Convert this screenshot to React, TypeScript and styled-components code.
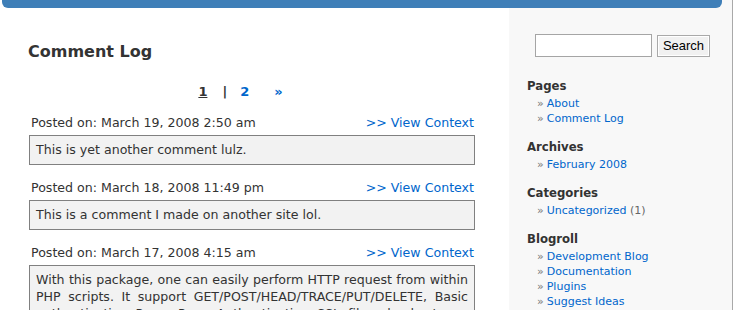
import React from "react";
import styled, { createGlobalStyle } from "styled-components";

const GlobalStyle = createGlobalStyle`
  html, body { margin: 0; padding: 0; background: #ffffff; }
  body { font-family: "DejaVu Sans", Verdana, sans-serif; color: #333333; overflow: hidden; }
  * { box-sizing: border-box; }
`;

const Wrapper = styled.div`
  width: 733px;
  min-height: 310px;
  border-right: 1px solid #a9a9a9;
  background: linear-gradient(to right, #ffffff 0, #ffffff 509px, #f8f8f8 509px, #f8f8f8 100%);
`;

const TopBar = styled.div`
  height: 8px;
  margin: 0 10px 0 2px;
  background: #3f7fb8;
  border-radius: 0 0 6px 6px;
`;

const Columns = styled.div`
  display: flex;
  align-items: flex-start;
`;

const Main = styled.main`
  width: 509px;
  padding: 0 34px 0 28px;
`;

const Title = styled.h1`
  margin: 33px 0 0;
  font-size: 16px;
  line-height: 22px;
  font-weight: bold;
  color: #333333;
`;

const Pager = styled.div`
  display: flex;
  justify-content: center;
  align-items: baseline;
  margin: 21px 0 0;
  padding-right: 22px;
  font-size: 13px;
  line-height: 16px;
  font-weight: bold;
`;

const PageNum = styled.a<{ $current?: boolean }>`
  color: ${(p) => (p.$current ? "#333333" : "#0066cc")};
  text-decoration: ${(p) => (p.$current ? "underline" : "none")};
  margin: 0 ${(p) => (p.$current ? "7px" : "0")} 0 0;
`;

const Sep = styled.span`
  color: #333333;
  margin: 0 13px 0 8px;
`;

const Next = styled.a`
  color: #0066cc;
  text-decoration: none;
  margin-left: 25px;
`;

const PostList = styled.div`
  margin: 14px 0 0 1px;
  width: 446px;
`;

const Post = styled.div`
  margin-bottom: 14px;
`;

const PostHead = styled.div`
  display: flex;
  justify-content: space-between;
  padding: 0 1px 0 2px;
  font-size: 12.6px;
  line-height: 17px;
  margin-bottom: 4px;
`;

const ContextLink = styled.a`
  color: #0066cc;
  text-decoration: none;
`;

const CommentBox = styled.div`
  border: 1px solid #808080;
  background: #f2f2f2;
  padding: 5px 6px 6px 6px;
  font-size: 12.6px;
  line-height: 17px;
  text-align: justify;
  color: #333333;
`;

const Sidebar = styled.aside`
  width: 223px;
  padding: 26px 0 0 18px;
`;

const SearchForm = styled.form`
  display: flex;
  align-items: center;
  gap: 5px;
  margin-left: 8px;
`;

const SearchInput = styled.input`
  width: 117px;
  height: 23px;
  border: 1px solid #a5a5a5;
  background: #ffffff;
  padding: 2px;
`;

const SearchButton = styled.button`
  height: 22px;
  width: 53px;
  padding: 0;
  border: 1px solid #a9a9a9;
  background: #f1f1f1;
  font-family: "Liberation Sans", Arial, sans-serif;
  font-size: 13px;
  color: #000000;
  box-shadow: inset 0 0 0 1px #ffffff;
`;

const Section = styled.section`
  margin-top: 21px;
  & + & { margin-top: 13px; }
`;

const SectionTitle = styled.h2`
  margin: 0 0 2px;
  font-size: 11.7px;
  line-height: 16px;
  font-weight: bold;
  color: #333333;
`;

const LinkList = styled.ul`
  list-style: none;
  margin: 0;
  padding: 0 0 0 10px;
`;

const LinkItem = styled.li`
  font-size: 11px;
  line-height: 15px;
  color: #666666;
  &::before {
    content: "»";
    color: #777777;
    margin-right: 3px;
  }
`;

const SideLink = styled.a`
  color: #0066cc;
  text-decoration: none;
`;

const Count = styled.span`
  color: #666666;
`;

const posts = [
  { date: "March 19, 2008 2:50 am", text: "This is yet another comment lulz." },
  { date: "March 18, 2008 11:49 pm", text: "This is a comment I made on another site lol." },
  {
    date: "March 17, 2008 4:15 am",
    text:
      "With this package, one can easily perform HTTP request from within PHP scripts. It support GET/POST/HEAD/TRACE/PUT/DELETE, Basic authentication, Proxy, Proxy Authentication, SSL, file uploads etc.",
  },
];

const sections: { title: string; links: { label: string; count?: string }[] }[] = [
  { title: "Pages", links: [{ label: "About" }, { label: "Comment Log" }] },
  { title: "Archives", links: [{ label: "February 2008" }] },
  { title: "Categories", links: [{ label: "Uncategorized", count: "(1)" }] },
  {
    title: "Blogroll",
    links: [
      { label: "Development Blog" },
      { label: "Documentation" },
      { label: "Plugins" },
      { label: "Suggest Ideas" },
    ],
  },
];

export default function App() {
  return (
    <>
      <GlobalStyle />
      <Wrapper>
        <TopBar />
        <Columns>
          <Main>
            <Title>Comment Log</Title>
            <Pager>
              <PageNum $current>1</PageNum>
              <Sep>|</Sep>
              <PageNum href="#">2</PageNum>
              <Next href="#">»</Next>
            </Pager>
            <PostList>
              {posts.map((p) => (
                <Post key={p.date}>
                  <PostHead>
                    <span>Posted on: {p.date}</span>
                    <ContextLink href="#">&gt;&gt; View Context</ContextLink>
                  </PostHead>
                  <CommentBox>{p.text}</CommentBox>
                </Post>
              ))}
            </PostList>
          </Main>
          <Sidebar>
            <SearchForm onSubmit={(e) => e.preventDefault()}>
              <SearchInput type="text" />
              <SearchButton type="submit">Search</SearchButton>
            </SearchForm>
            {sections.map((s) => (
              <Section key={s.title}>
                <SectionTitle>{s.title}</SectionTitle>
                <LinkList>
                  {s.links.map((l) => (
                    <LinkItem key={l.label}>
                      <SideLink href="#">{l.label}</SideLink>
                      {l.count ? <Count> {l.count}</Count> : null}
                    </LinkItem>
                  ))}
                </LinkList>
              </Section>
            ))}
          </Sidebar>
        </Columns>
      </Wrapper>
    </>
  );
}
